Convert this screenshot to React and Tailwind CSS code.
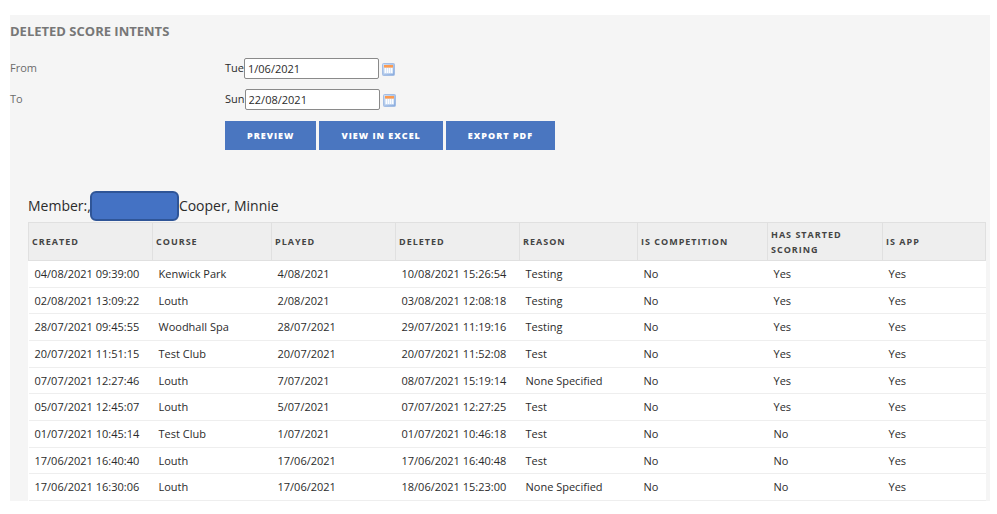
import React from "react";

const columns = [
  { title: "Created", width: "w-[124px]" },
  { title: "Course", width: "w-[119px]" },
  { title: "Played", width: "w-[124px]" },
  { title: "Deleted", width: "w-[124px]" },
  { title: "Reason", width: "w-[118px]" },
  { title: "Is Competition", width: "w-[130px]" },
  { title: "Has Started Scoring", width: "w-[115px]" },
  { title: "Is App", width: "w-[103px]" },
];

const rows = [
  ["04/08/2021 09:39:00", "Kenwick Park", "4/08/2021", "10/08/2021 15:26:54", "Testing", "No", "Yes", "Yes"],
  ["02/08/2021 13:09:22", "Louth", "2/08/2021", "03/08/2021 12:08:18", "Testing", "No", "Yes", "Yes"],
  ["28/07/2021 09:45:55", "Woodhall Spa", "28/07/2021", "29/07/2021 11:19:16", "Testing", "No", "Yes", "Yes"],
  ["20/07/2021 11:51:15", "Test Club", "20/07/2021", "20/07/2021 11:52:08", "Test", "No", "Yes", "Yes"],
  ["07/07/2021 12:27:46", "Louth", "7/07/2021", "08/07/2021 15:19:14", "None Specified", "No", "Yes", "Yes"],
  ["05/07/2021 12:45:07", "Louth", "5/07/2021", "07/07/2021 12:27:25", "Test", "No", "Yes", "Yes"],
  ["01/07/2021 10:45:14", "Test Club", "1/07/2021", "01/07/2021 10:46:18", "Test", "No", "No", "Yes"],
  ["17/06/2021 16:40:40", "Louth", "17/06/2021", "17/06/2021 16:40:48", "Test", "No", "No", "Yes"],
  ["17/06/2021 16:30:06", "Louth", "17/06/2021", "18/06/2021 15:23:00", "None Specified", "No", "No", "Yes"],
];

function CalendarIcon() {
  return (
    <svg className="h-[13px] w-[13px]" viewBox="0 0 13 13" aria-hidden="true">
      <defs>
        <linearGradient id="calFrame" x1="0" y1="0" x2="1" y2="1">
          <stop offset="0" stopColor="#d3e2f5" />
          <stop offset="1" stopColor="#86a9dd" />
        </linearGradient>
      </defs>
      <rect x="0.5" y="0.5" width="12" height="12" rx="1" fill="url(#calFrame)" stroke="#a3bde4" />
      <rect x="2" y="4" width="9" height="6.5" fill="#dbe8f8" />
      <rect x="2" y="2" width="9" height="2.6" fill="#fb9a50" />
      <path d="M3.5 5v5M5.5 5v5M7.5 5v5M9.5 5v5" stroke="#ffffff" strokeWidth="0.9" />
    </svg>
  );
}

function DateField({ id, label, day, value }) {
  return (
    <div className="flex items-center">
      <label htmlFor={id} className="w-[215px] text-[#6b6b6b]">{label}</label>
      <span>{day}</span>
      <input
        id={id}
        type="text"
        defaultValue={value}
        className="h-[21px] w-[135px] rounded-xs border border-[#8a8a8a] bg-white px-[3px] text-[11px] text-[#2b2b2b]"
      />
      <button type="button" aria-label={`Choose ${label} date`} className="ml-[3px] pt-[2px]">
        <CalendarIcon />
      </button>
    </div>
  );
}

function ActionButton({ children }) {
  return (
    <button
      type="button"
      className="h-[29px] bg-[#4a76c0] px-[22px] text-[9px] font-extrabold tracking-[1px] text-white uppercase"
    >
      {children}
    </button>
  );
}

export default function App() {
  return (
    <div className="bg-white px-[10px] py-[15px] pr-[7px] font-['Open_Sans','Noto_Sans',sans-serif] text-[11px] text-[#2b2b2b]">
      <main className="bg-[#f5f5f5]">
        <h1 className="pt-[7px] text-[13px] leading-[18px] font-bold text-[#777777] uppercase">Deleted Score Intents</h1>

        {/* Date range */}
        <form className="pt-[18px]" onSubmit={(e) => e.preventDefault()}>
          <div className="flex flex-col gap-[10px]">
            <DateField id="from" label="From" day="Tue" value="1/06/2021" />
            <DateField id="to" label="To" day="Sun" value="22/08/2021" />
          </div>
          <div className="flex gap-[3px] pt-[11px] pl-[215px]">
            <ActionButton>Preview</ActionButton>
            <ActionButton>View in Excel</ActionButton>
            <ActionButton>Export PDF</ActionButton>
          </div>
        </form>

        {/* Report */}
        <section className="pt-[41px] pr-[6px] pl-[18px]">
          <h2 className="flex items-center text-[14px] leading-[20px]">
            Member:,
            <span className="-ml-px h-[30px] w-[89px] rounded-md border-2 border-[#2f5597] bg-[#4472c4]"></span>
            Cooper, Minnie
          </h2>
          <table className="mt-px w-full table-fixed border-collapse bg-white text-left">
            <thead>
              <tr className="h-[38px] bg-[#eeeeee]">
                {columns.map((col) => (
                  <th
                    key={col.title}
                    className={`${col.width} border border-[#e0e0e0] px-[3px] text-[9px] leading-[15px] font-bold tracking-[1px] text-[#444444] uppercase`}
                  >
                    {col.title}
                  </th>
                ))}
              </tr>
            </thead>
            <tbody>
              {rows.map((row) => (
                <tr key={row[0]} className="h-[27px] border-b border-[#eeeeee] nth-[3n+2]:h-[26px]">
                  {row.map((cell, i) => (
                    <td key={i} className="px-[6px] leading-[16px] whitespace-nowrap">{cell}</td>
                  ))}
                </tr>
              ))}
            </tbody>
          </table>
        </section>
      </main>
    </div>
  );
}
